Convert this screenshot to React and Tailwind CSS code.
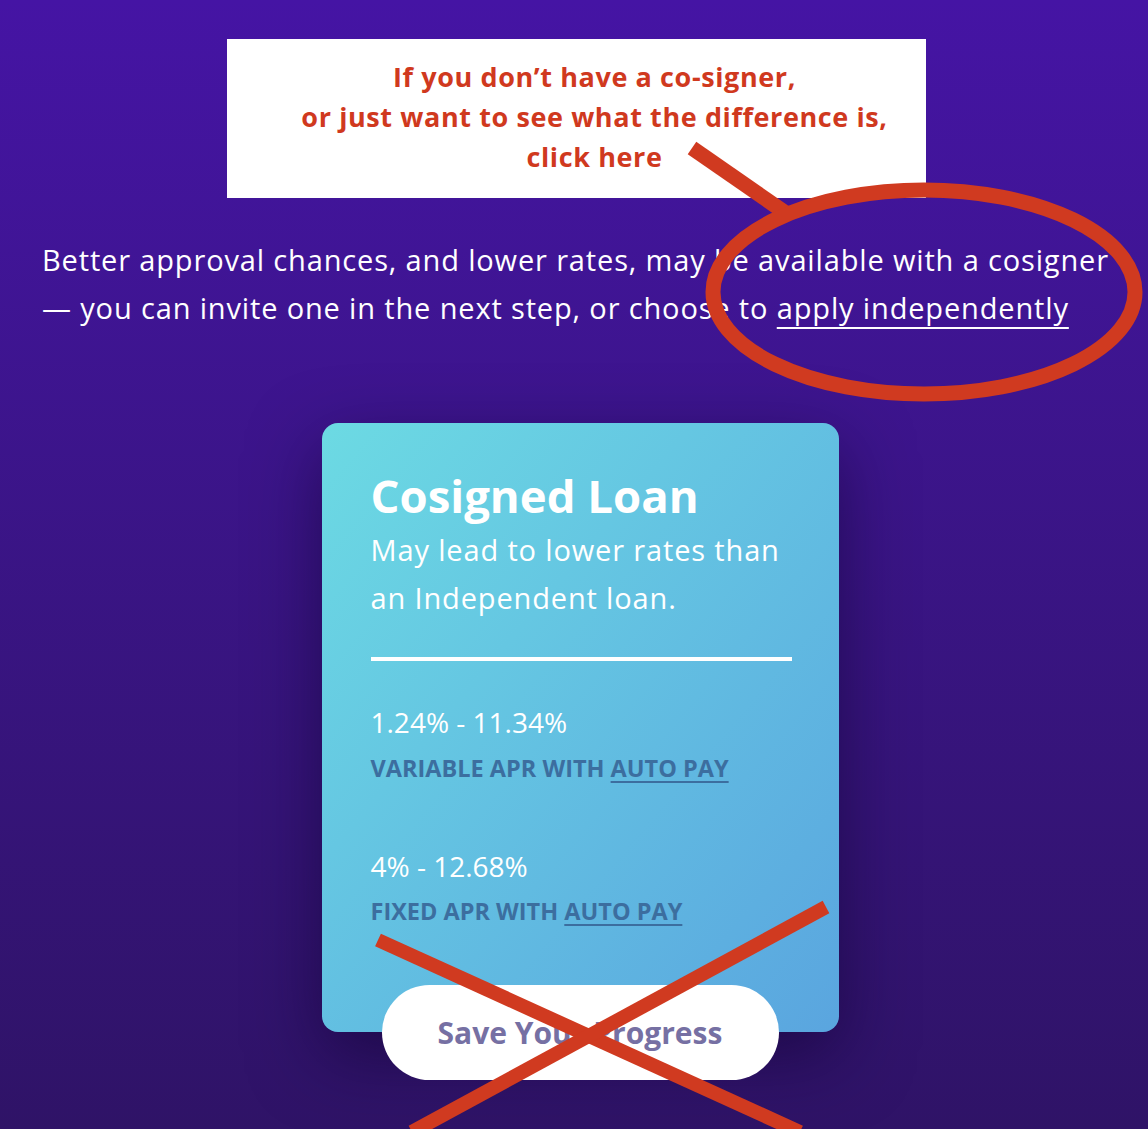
export default function App() {
  return (
    <div
      className="relative w-full min-h-[1129px] overflow-hidden bg-gradient-to-b from-[#4514a4] to-[#2f1367]"
      style={{ fontFamily: "'Open Sans', Lato, sans-serif" }}
    >
      <div className="pt-[39px] pl-[5px] flex justify-center">
        <div className="w-[699px] h-[159px] bg-white flex flex-col items-center justify-center pl-[36px] pb-[4px]">
          <p className="text-center text-[27px] leading-[40px] font-bold text-[#d0391e] tracking-[0.6px]">
            If you don’t have a co-signer,
            <br />
            or just want to see what the difference is,
            <br />
            click here
          </p>
        </div>
      </div>

      <p className="mt-[38px] pl-[42px] text-[29px] leading-[48px] text-white whitespace-nowrap tracking-[0.85px]">
        Better approval chances, and lower rates, may be available with a cosigner
        <br />— you can invite one in the next step, or choose to{" "}
        <span className="underline decoration-2 underline-offset-[8px]">apply independently</span>
      </p>

      <div className="mt-[91px] pl-[12px] flex flex-col items-center">
        <div className="w-[517px] h-[609px] rounded-[16px] bg-gradient-to-br from-[#6cdae3] to-[#5aa5df] shadow-[0_24px_70px_rgba(15,0,45,0.55)] pl-[49px] pr-[30px] pt-[44px]">
          <h2 className="text-[45.5px] leading-[56px] font-bold text-white">Cosigned Loan</h2>
          <p className="text-[29px] leading-[48px] text-white mt-[3px] tracking-[0.85px]">
            May lead to lower rates than
            <br />
            an Independent loan.
          </p>
          <div className="mt-[35px] h-[4px] w-[421px] bg-white" />
          <div className="mt-[45px] text-[28px] leading-[32px] text-white">1.24% - 11.34%</div>
          <div className="mt-[17px] text-[23.5px] leading-[26px] font-bold text-[#3c6e9f]">
            VARIABLE APR WITH <span className="underline decoration-[2px] underline-offset-[4px]">AUTO PAY</span>
          </div>
          <div className="mt-[69px] text-[28px] leading-[32px] text-white">4% - 12.68%</div>
          <div className="mt-[16px] text-[23.5px] leading-[26px] font-bold text-[#3c6e9f]">
            FIXED APR WITH <span className="underline decoration-[2px] underline-offset-[4px]">AUTO PAY</span>
          </div>
        </div>
        <button className="mt-[-47px] w-[397px] h-[95px] rounded-full bg-white text-[30px] font-bold text-[#7670a3]">
          Save Your Progress
        </button>
      </div>

      <svg
        className="absolute left-0 top-0 pointer-events-none"
        width="1148"
        height="1129"
        viewBox="0 0 1148 1129"
      >
        <g stroke="#d03a20" fill="none" strokeWidth="15">
          <line x1="692" y1="148" x2="790" y2="216" />
          <ellipse cx="924" cy="292" rx="211" ry="102" />
          <line x1="378" y1="940" x2="800" y2="1132" strokeWidth="14" />
          <line x1="826" y1="907" x2="412" y2="1132" strokeWidth="14" />
        </g>
      </svg>
    </div>
  );
}
